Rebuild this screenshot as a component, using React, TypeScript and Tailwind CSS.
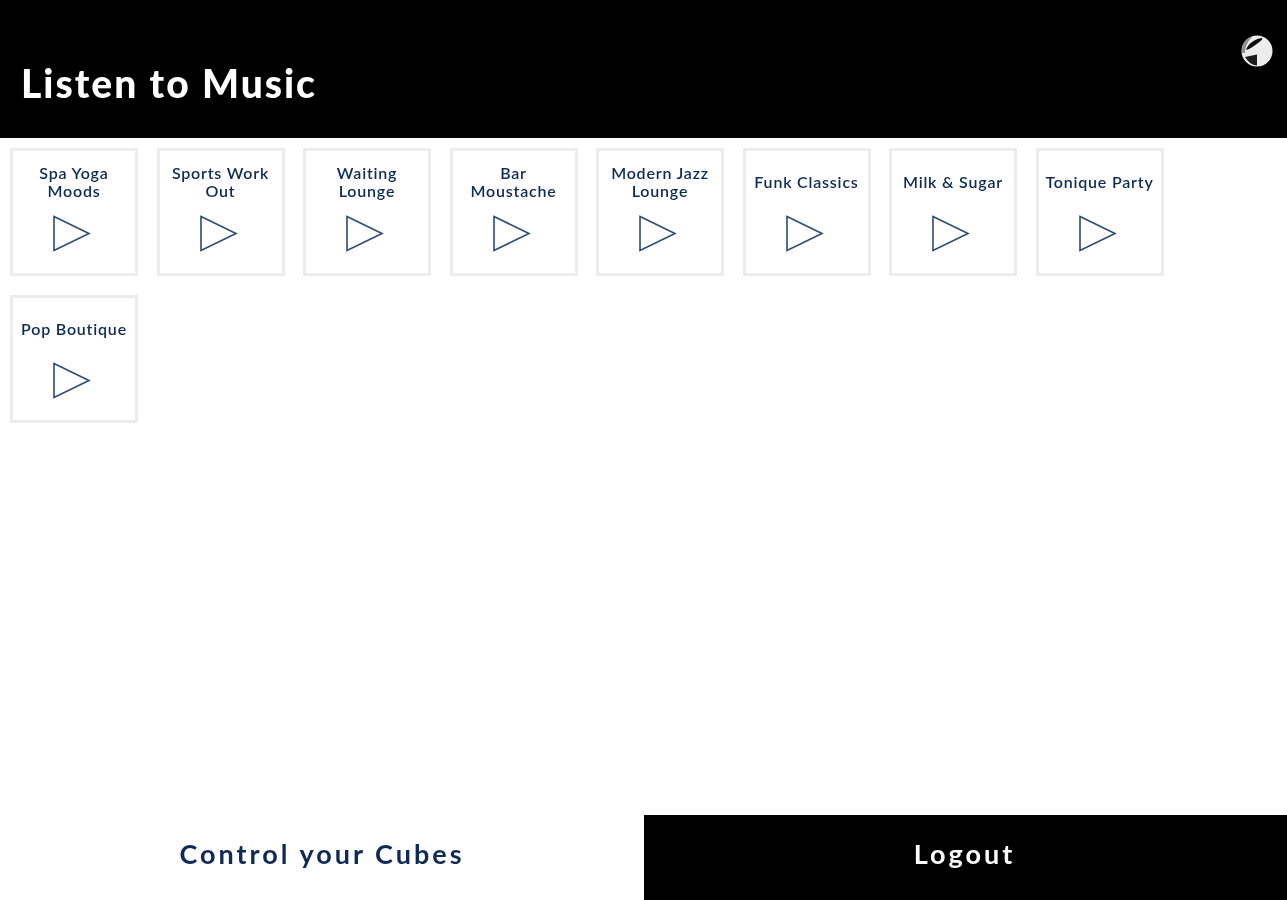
import React from 'react'

const playlists = [
  'Spa Yoga Moods',
  'Sports Work Out',
  'Waiting Lounge',
  'Bar Moustache',
  'Modern Jazz Lounge',
  'Funk Classics',
  'Milk & Sugar',
  'Tonique Party',
  'Pop Boutique',
]

const Globe = () => (
  <svg width="34" height="34" viewBox="0 0 34 34">
    <circle cx="17" cy="17" r="15.5" fill="#ececec" />
    <path d="M2 19 C1 11 6 4 13 2 C8 7 5 12 5 19 Z" fill="#8f8f8f" />
    <path d="M6 16 C8 10 14 5 22 4 C23 5 21 7 18 9 C14 12 10 15 6 16 Z" fill="#0a0a0a" />
    <path d="M5 23 L17 20.5 L17 31.5 C12 31 8 28 5 23 Z" fill="#1c1c1c" />
  </svg>
)

const Tile = ({ name }: { name: string }) => (
  <div className="w-[128px] h-[128px] border-[3px] border-[#ececec] flex flex-col items-center">
    <div className="h-[57px] w-full flex items-center justify-center text-center px-[5px] pt-[4px]">
      <p className="text-[16px] leading-[18px] font-semibold tracking-[0.8px] text-[#0f2a55]">{name}</p>
    </div>
    <svg width="40" height="40" viewBox="0 0 40 40" className="-ml-[4px] mt-[6px]">
      <path d="M2 2.5 L37 19.5 L2 36.5 Z" fill="none" stroke="#2d4a75" strokeWidth="1.6" />
    </svg>
  </div>
)

const App = () => {
  return (
    <div className="h-[900px] flex flex-col bg-white font-['Lato',sans-serif] blur-[0.6px]">
      <div className="h-[138px] bg-black text-white flex items-start justify-between">
        <h1 className="mt-[61px] ml-[21px] text-[39px] leading-[44px] font-black tracking-[2px]">Listen to Music</h1>
        <div className="mt-[34px] mr-[13px]">
          <Globe />
        </div>
      </div>
      <div className="flex-1 flex flex-wrap content-start gap-x-[18.5px] gap-y-[19px] pt-[10px] pl-[10px]">
        {playlists.map((name) => (
          <Tile key={name} name={name} />
        ))}
      </div>
      <div className="h-[85px] flex">
        <div className="w-[644px] flex items-center justify-center pb-[6px] text-[27px] font-bold tracking-[3px] text-[#0f2a55]">
          Control your Cubes
        </div>
        <div className="flex-1 bg-black text-white flex items-center justify-center pb-[6px] pr-[2px] text-[27px] font-bold tracking-[3px]">
          Logout
        </div>
      </div>
    </div>
  )
}

export default App
